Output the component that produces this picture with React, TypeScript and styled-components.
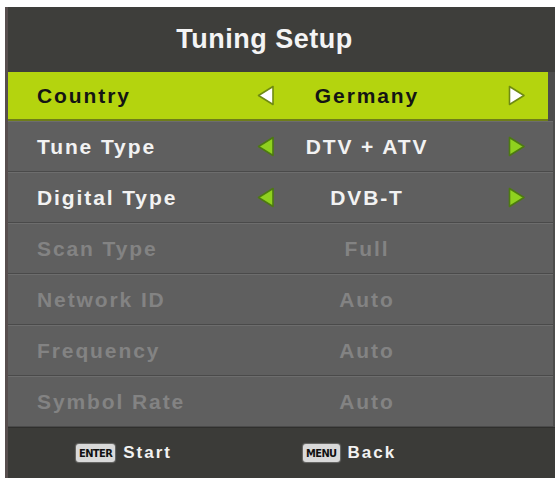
import React from 'react';
import styled, { createGlobalStyle } from 'styled-components';

const GlobalStyle = createGlobalStyle`
  html, body {
    margin: 0;
    padding: 0;
    background: #ffffff;
  }
  body {
    font-family: "Liberation Sans", Arial, sans-serif;
  }
`;

const Panel = styled.div`
  margin: 7px 0 0 5px;
  width: 550px;
  height: 471px;
  background: #4c4c4b;
  display: flex;
  flex-direction: column;
  border-left: 3px solid #574e4e;
  box-sizing: border-box;
`;

const Header = styled.div`
  height: 65px;
  background: #3e3e3b;
  display: flex;
  align-items: center;
  justify-content: center;
  padding-right: 34px;
  color: #f4f4f4;
  font-size: 27px;
  font-weight: bold;
  letter-spacing: 0.5px;
`;

const Row = styled.div<{ $selected?: boolean }>`
  height: ${p => (p.$selected ? '49px' : '51px')};
  box-sizing: border-box;
  display: grid;
  grid-template-columns: 215px 28px 174px 77px;
  align-items: center;
  padding-left: 29px;
  margin-right: ${p => (p.$selected ? '7px' : '2px')};
  background: ${p => (p.$selected ? '#b4d40e' : '#5f5f5f')};
  border-bottom: ${p => (p.$selected ? '2px solid #6f7d1a' : '1px solid #4a4a4a')};
  border-top: ${p => (p.$selected ? 'none' : '1px solid #6d6d6d')};
  font-size: 21px;
  font-weight: bold;
  letter-spacing: 1.9px;
  color: ${p => (p.$selected ? '#141414' : '#f2f2f2')};
`;

const Label = styled.span<{ $disabled?: boolean }>`
  white-space: nowrap;
  color: ${p => (p.$disabled ? '#838383' : 'inherit')};
`;

const Value = styled.span<{ $disabled?: boolean }>`
  text-align: center;
  white-space: nowrap;
  color: ${p => (p.$disabled ? '#838383' : 'inherit')};
`;

const ArrowBox = styled.span<{ $end?: boolean }>`
  display: flex;
  width: 28px;
  justify-content: center;
  justify-self: ${p => (p.$end ? 'end' : 'start')};
`;

const Footer = styled.div`
  flex: 1;
  background: #3b3b38;
  display: grid;
  grid-template-columns: 227px 227px;
  align-items: center;
  padding-left: 68px;
  border-top: 1px solid #2f2f2d;
`;

const Hint = styled.div`
  display: flex;
  align-items: center;
  gap: 8px;
  color: #f2f2f2;
  font-size: 17px;
  font-weight: bold;
  letter-spacing: 2px;
`;

const KeyBadge = styled.span`
  display: inline-flex;
  align-items: center;
  justify-content: center;
  height: 18px;
  padding: 0 3px;
  background: #d9d9d9;
  border-radius: 3px;
  color: #111;
  font-family: "DejaVu Sans Condensed", "Liberation Sans", sans-serif;
  font-size: 11px;
  font-weight: bold;
  letter-spacing: -0.6px;
  box-shadow: 0 0 1px 1px rgba(255, 255, 255, 0.25);
`;

const Arrow: React.FC<{ dir: 'left' | 'right'; selected?: boolean }> = ({ dir, selected }) => {
  const points = dir === 'left' ? '16,1.5 16,19.5 1.5,10.5' : '1.5,1.5 1.5,19.5 16,10.5';
  return (
    <svg width="18" height="21" viewBox="0 0 18 21">
      <polygon
        points={points}
        fill={selected ? '#ffffff' : '#8fd11f'}
        stroke={selected ? '#6f8a12' : '#4d7a12'}
        strokeWidth="1.6"
        strokeLinejoin="round"
      />
    </svg>
  );
};

const rows = [
  { label: 'Country', value: 'Germany', arrows: true, selected: true },
  { label: 'Tune Type', value: 'DTV + ATV', arrows: true },
  { label: 'Digital Type', value: 'DVB-T', arrows: true },
  { label: 'Scan Type', value: 'Full', disabled: true },
  { label: 'Network ID', value: 'Auto', disabled: true },
  { label: 'Frequency', value: 'Auto', disabled: true },
  { label: 'Symbol Rate', value: 'Auto', disabled: true },
];

export default function App() {
  return (
    <>
      <GlobalStyle />
      <Panel>
        <Header>Tuning Setup</Header>
        {rows.map(r => (
          <Row key={r.label} $selected={r.selected}>
            <Label $disabled={r.disabled}>{r.label}</Label>
            <ArrowBox>{r.arrows && <Arrow dir="left" selected={r.selected} />}</ArrowBox>
            <Value $disabled={r.disabled}>{r.value}</Value>
            <ArrowBox $end>{r.arrows && <Arrow dir="right" selected={r.selected} />}</ArrowBox>
          </Row>
        ))}
        <Footer>
          <Hint>
            <KeyBadge>ENTER</KeyBadge>
            Start
          </Hint>
          <Hint>
            <KeyBadge>MENU</KeyBadge>
            Back
          </Hint>
        </Footer>
      </Panel>
    </>
  );
}
